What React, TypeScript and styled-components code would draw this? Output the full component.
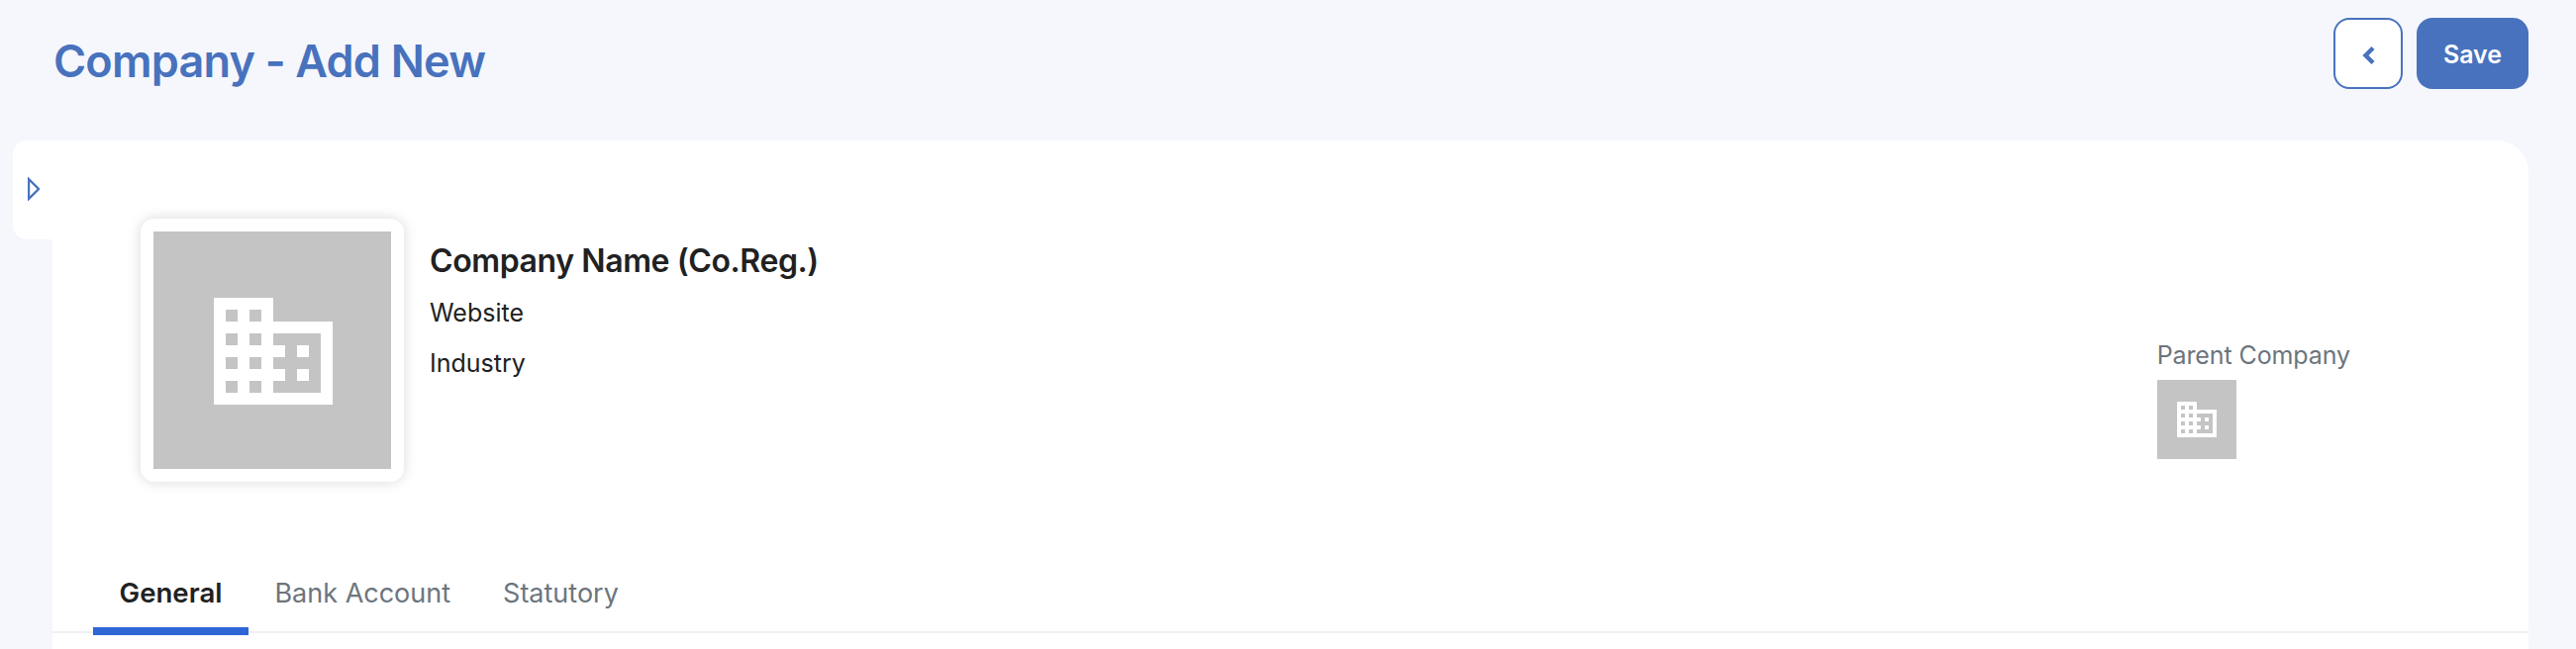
import { MdDomain } from 'react-icons/md';
import styled, { createGlobalStyle } from 'styled-components';

const GlobalStyle = createGlobalStyle`
  html, body {
    margin: 0;
    padding: 0;
    height: 656px;
    overflow: hidden;
    background: #f5f7fc;
    font-family: 'Inter', 'Liberation Sans', sans-serif;
  }
`;

const Page = styled.div`
  display: flex;
  flex-direction: column;
  height: 656px;
  overflow: hidden;
`;

const Header = styled.header`
  display: flex;
  justify-content: space-between;
  align-items: flex-start;
  height: 142px;
  padding: 18px 48px 0 54px;
  box-sizing: border-box;
`;

const Title = styled.h1`
  margin: 14px 0 0;
  font-size: 45px;
  line-height: 60px;
  font-weight: 600;
  letter-spacing: -0.8px;
  color: #4872bd;
`;

const Actions = styled.div`
  display: flex;
  gap: 14px;
`;

const BackButton = styled.button`
  display: flex;
  align-items: center;
  justify-content: center;
  width: 70px;
  height: 72px;
  padding: 4px 0 0 2px;
  box-sizing: border-box;
  background: #fff;
  border: 2px solid #4872bd;
  border-radius: 16px;
`;

const SaveButton = styled.button`
  width: 113px;
  height: 72px;
  padding: 2px 0 0;
  background: #4872bd;
  border: 0;
  border-radius: 16px;
  color: #fff;
  font: 600 25px 'Inter', sans-serif;
`;

const Body = styled.div`
  display: flex;
  flex: 1;
  padding: 0 48px 0 13px;
`;

const SideToggle = styled.div`
  display: flex;
  align-items: center;
  flex: none;
  width: 40px;
  height: 100px;
  padding-left: 15px;
  padding-bottom: 2px;
  box-sizing: border-box;
  background: #fff;
  border-radius: 14px 0 0 14px;
`;

const Card = styled.main`
  flex: 1;
  display: flex;
  flex-direction: column;
  background: #fff;
  border-radius: 0 32px 0 0;
`;

const Profile = styled.section`
  display: flex;
  height: 419px;
  padding: 79px 180px 0 89px;
  box-sizing: border-box;
`;

const Avatar = styled.div`
  flex: none;
  width: 266px;
  height: 266px;
  padding: 13px;
  box-sizing: border-box;
  background: #fff;
  border-radius: 14px;
  box-shadow: 0 0 14px rgba(0, 0, 0, 0.15);

  svg {
    margin: 2px 0 0 2px;
  }
`;

const Placeholder = styled.div<{ $size: number }>`
  display: flex;
  align-items: center;
  justify-content: center;
  width: ${(p) => p.$size}px;
  height: ${(p) => p.$size}px;
  background: #c4c4c4;
  color: #fff;
`;

const Info = styled.div`
  flex: 1;
  padding: 23px 0 0 26px;
`;

const Name = styled.div`
  font-size: 32px;
  line-height: 40px;
  font-weight: 600;
  letter-spacing: -0.4px;
  color: #212121;
`;

const Detail = styled.div`
  margin-top: 12px;
  font-size: 25px;
  line-height: 40px;
  color: #212121;
  & + & {
    margin-top: 11px;
  }
`;

const Parent = styled.div`
  flex: none;
  padding-top: 118px;
`;

const ParentLabel = styled.div`
  margin-bottom: 5px;
  font-size: 25px;
  line-height: 40px;
  letter-spacing: -0.1px;
  color: #6c757d;
`;

const Tabs = styled.nav`
  display: flex;
  height: 79px;
  padding-left: 41px;
  box-sizing: border-box;
  border-bottom: 2px solid #f0f0f2;
`;

const Tab = styled.div<{ $active?: boolean }>`
  height: 81px;
  padding: 0 26.5px;
  box-sizing: border-box;
  border-bottom: 8px solid ${(p) => (p.$active ? '#2f66d6' : 'transparent')};
  font-size: ${(p) => (p.$active ? 27.6 : 27)}px;
  line-height: 77px;
  font-weight: ${(p) => (p.$active ? 600 : 400)};
  color: ${(p) => (p.$active ? '#212121' : '#6c757d')};
`;

export default function App() {
  return (
    <Page>
      <GlobalStyle />
      <Header>
        <Title>Company - Add New</Title>
        <Actions>
          <BackButton>
            <svg width="14" height="20" viewBox="0 0 14 20">
              <path d="M11 2.5L3.5 10l7.5 7.5" fill="none" stroke="#4872bd" strokeWidth="4.4" />
            </svg>
          </BackButton>
          <SaveButton>Save</SaveButton>
        </Actions>
      </Header>
      <Body>
        <SideToggle>
          <svg width="12" height="24" viewBox="0 0 12 24">
            <path d="M1 2l10 10L1 22z" fill="none" stroke="#4872bd" strokeWidth="2.4" />
          </svg>
        </SideToggle>
        <Card>
          <Profile>
            <Avatar>
              <Placeholder $size={240}>
                <MdDomain size={144} />
              </Placeholder>
            </Avatar>
            <Info>
              <Name>Company Name (Co.Reg.)</Name>
              <Detail>Website</Detail>
              <Detail>Industry</Detail>
            </Info>
            <Parent>
              <ParentLabel>Parent Company</ParentLabel>
              <Placeholder $size={80}>
                <MdDomain size={48} />
              </Placeholder>
            </Parent>
          </Profile>
          <Tabs>
            <Tab $active>General</Tab>
            <Tab>Bank Account</Tab>
            <Tab>Statutory</Tab>
          </Tabs>
        </Card>
      </Body>
    </Page>
  );
}
